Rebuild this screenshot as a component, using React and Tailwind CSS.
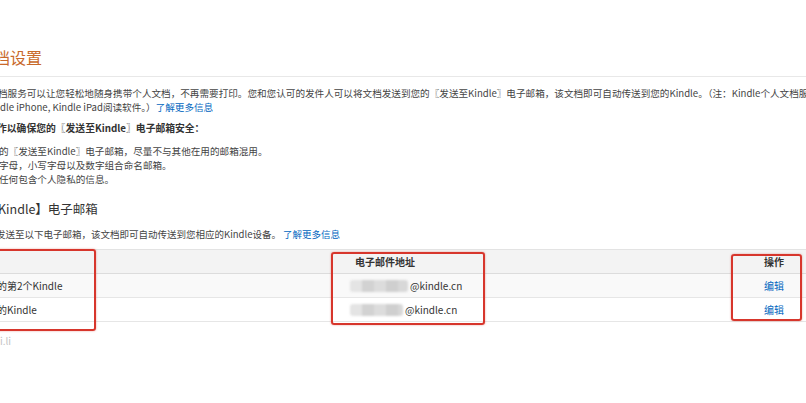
export default function App() {
  const link = "text-[#0066c0]";
  const Blob = ({ w }) => (
    <span
      className="inline-flex h-[12px] overflow-hidden rounded-[3px] blur-[1.2px] -ml-[5px] mr-[2px]"
      style={{ width: w }}
    >
      <span className="h-full w-[12px] bg-[#e4e4e4]" />
      <span className="h-full w-[12px] bg-[#d2d2d2]" />
      <span className="h-full w-[12px] bg-[#dcdcdc]" />
      <span className="h-full w-[12px] bg-[#cfcfcf]" />
      <span className="h-full flex-1 bg-[#d8d8d8]" />
    </span>
  );
  return (
    <div className="relative w-[806px] h-[403px] overflow-hidden bg-white text-[#333] font-['Noto_Sans_CJK_SC',sans-serif]">
      <div className="pt-[46px]">
        <h1 className="-ml-[6px] whitespace-nowrap text-[16px] leading-[23px] text-[#c8692a]">
          档设置
        </h1>
        <div className="mt-[7px] h-px bg-[#e8e8e8]" />
        <div className="mt-[9px] text-[9.6px] leading-[14px] text-[#444]">
          <p className="-ml-[2px] whitespace-nowrap">
            档服务可以让您轻松地随身携带个人文档，不再需要打印。您和您认可的发件人可以将文档发送到您的〖发送至Kindle〗电子邮箱，该文档即可自动传送到您的Kindle。（注：Kindle个人文档服务
          </p>
          <p className="whitespace-nowrap">
            dle iPhone, Kindle iPad阅读软件。）<span className={link}>了解更多信息</span>
          </p>
        </div>
        <p className="-ml-[3px] mt-[7px] whitespace-nowrap text-[9.8px] font-bold leading-[14px] text-[#333]">
          作以确保您的〖发送至Kindle〗电子邮箱安全：
        </p>
        <ul className="mt-[9px] text-[9.6px] leading-[14px] text-[#444]">
          <li className="-ml-[1px] whitespace-nowrap">的〖发送至Kindle〗电子邮箱，尽量不与其他在用的邮箱混用。</li>
          <li className="-ml-[1px] whitespace-nowrap">字母，小写字母以及数字组合命名邮箱。</li>
          <li className="-ml-[1px] whitespace-nowrap">任何包含个人隐私的信息。</li>
        </ul>
        <h2 className="-ml-[2px] mt-[14px] whitespace-nowrap text-[12.5px] leading-[18px] text-[#333]">
          Kindle】电子邮箱
        </h2>
        <p className="-ml-[4px] mt-[9px] whitespace-nowrap text-[9.5px] leading-[14px] text-[#444]">
          发送至以下电子邮箱，该文档即可自动传送到您相应的Kindle设备。 <span className={link}>了解更多信息</span>
        </p>
        <div className="mt-[8px] border-t border-[#e3e3e3] text-[10px] text-[#333]">
          <div className="grid h-[24px] grid-cols-[355px_1fr_auto] items-center border-b border-[#dcdcdc] bg-[#f3f3f3] font-bold">
            <div />
            <div>电子邮件地址</div>
            <div className="pr-[22px]">操作</div>
          </div>
          <div className="grid h-[24px] grid-cols-[355px_1fr_auto] items-center border-b border-[#e6e6e6] bg-[#f9f9f9]">
            <div className="-ml-[3px] whitespace-nowrap">的第2个Kindle</div>
            <div className="flex items-center">
              <Blob w={58} />
              <span>@kindle.cn</span>
            </div>
            <div className={`pr-[22px] ${link}`}>编辑</div>
          </div>
          <div className="grid h-[24px] grid-cols-[355px_1fr_auto] items-center border-b border-[#e6e6e6] bg-white">
            <div className="-ml-[3px] whitespace-nowrap">的Kindle</div>
            <div className="flex items-center">
              <Blob w={53} />
              <span>@kindle.cn</span>
            </div>
            <div className={`pr-[22px] ${link}`}>编辑</div>
          </div>
        </div>
        <p className="mt-[13px] text-[10px] leading-[12px] text-[#c4c4c4]">i.li</p>
      </div>

      <div className="absolute left-[-5px] top-[249px] h-[82px] w-[101px] rounded-[3px] border-2 border-[#d7362c] shadow-[0_0_2px_rgba(215,54,44,0.5)]" />
      <div className="absolute left-[331px] top-[252px] h-[73px] w-[154px] rounded-[3px] border-2 border-[#d7362c] shadow-[0_0_2px_rgba(215,54,44,0.5)]" />
      <div className="absolute left-[731px] top-[254px] h-[67px] w-[71px] rounded-[3px] border-2 border-[#d7362c] shadow-[0_0_2px_rgba(215,54,44,0.5)]" />
    </div>
  );
}
